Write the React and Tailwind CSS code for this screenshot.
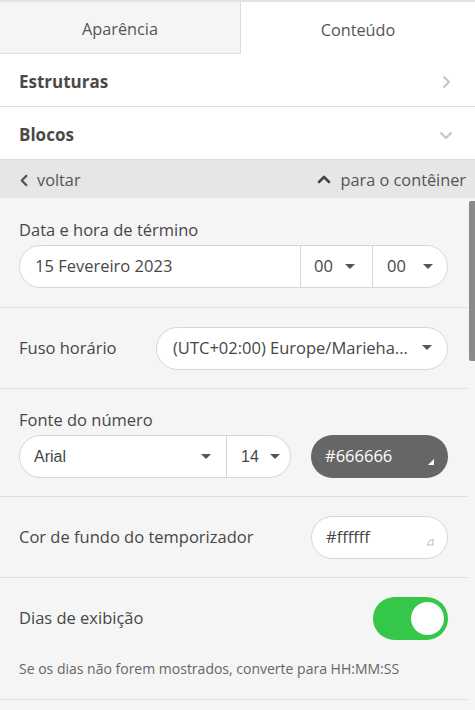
import React from 'react';

const Caret = ({ className = '' }) => (
  <svg width="10" height="6" viewBox="0 0 10 6" className={className}>
    <path d="M0 0 L10 0 L5 5 Z" fill="#555" />
  </svg>
);

const Chevron = ({ dir = 'right', color = '#c4c4c4', size = 14, stroke = 2 }) => {
  const d = {
    right: 'M5 2 L10 7 L5 12',
    down: 'M2 5 L7 10 L12 5',
    left: 'M9 2 L4 7 L9 12',
    up: 'M2 9 L7 4 L12 9',
  }[dir];
  return (
    <svg width={size} height={size} viewBox="0 0 14 14">
      <path d={d} fill="none" stroke={color} strokeWidth={stroke} strokeLinecap="round" strokeLinejoin="round" />
    </svg>
  );
};

const Corner = ({ light }) => (
  <svg width="8" height="8" viewBox="0 0 8 8" className="absolute right-[13px] bottom-[12px]">
    {light ? (
      <path d="M7 1 L7 7 L1 7 Q2 3 7 1 Z" fill="none" stroke="#bbb" strokeWidth="1" />
    ) : (
      <path d="M7 1 L7 7 L1 7 Z" fill="#fff" />
    )}
  </svg>
);

export default function App() {
  return (
    <div className="w-[475px] h-[710px] overflow-hidden bg-white text-[#474747] relative" style={{ fontFamily: '"Open Sans", "Noto Sans", sans-serif' }}>
      {/* tabs */}
      <div className="flex h-[54px] border-t-2 border-[#e3e3e3]">
        <div className="w-[241px] flex items-center justify-center pt-[4px] bg-[#f5f5f5] border-r border-b border-[#dcdcdc] text-[16.3px] text-[#555]">Aparência</div>
        <div className="flex-1 flex items-center justify-center pt-[4px] text-[16.3px] text-[#555]">Conteúdo</div>
      </div>

      <div className="h-[53px] flex items-center justify-between pt-[3px] pl-[19px] pr-[22px] border-b border-[#dcdcdc]">
        <span className="text-[17px] font-bold text-[#4a4a4a]">Estruturas</span>
        <Chevron dir="right" />
      </div>
      <div className="h-[53px] flex items-center justify-between pt-[3px] pl-[19px] pr-[22px] border-b border-[#dcdcdc]">
        <span className="text-[17px] font-bold text-[#4a4a4a]">Blocos</span>
        <Chevron dir="down" />
      </div>

      <div className="h-[38px] bg-[#e6e6e6] flex items-center justify-between pt-[2px] pl-[18px] pr-[9px] text-[16.3px] text-[#555]">
        <div className="flex items-center gap-[6px]">
          <Chevron dir="left" color="#555" size={13} stroke={2.4} />
          <span>voltar</span>
        </div>
        <div className="flex items-center gap-[10px]">
          <Chevron dir="up" color="#444" size={14} stroke={2.6} />
          <span>para o contêiner</span>
        </div>
      </div>

      <div className="bg-[#f5f5f5] flex">
        <div className="w-[467px]">
          {/* date */}
          <div className="pl-[19px] pr-[19px] pt-[21px] pb-[19px] border-b border-[#dcdcdc]">
            <div className="text-[16.5px] leading-[22px] mb-[4px]">Data e hora de término</div>
            <div className="h-[43px] flex bg-white border border-[#d6d6d6] rounded-full text-[16.5px]">
              <div className="w-[281px] flex items-center pl-[15px] border-r border-[#d6d6d6]">15 Fevereiro 2023</div>
              <div className="w-[72px] flex items-center justify-between pl-[13px] pr-[17px] border-r border-[#d6d6d6]">
                <span>00</span>
                <Caret />
              </div>
              <div className="flex-1 flex items-center justify-between pl-[14px] pr-[14px]">
                <span>00</span>
                <Caret />
              </div>
            </div>
          </div>

          {/* timezone */}
          <div className="h-[81px] flex items-center justify-between pl-[19px] pr-[19px] border-b border-[#dcdcdc]">
            <span className="text-[16.5px]">Fuso horário</span>
            <div className="w-[292px] h-[43px] bg-white border border-[#d6d6d6] rounded-full flex items-center justify-between pl-[16px] pr-[15px] text-[16.5px]">
              <span className="whitespace-nowrap">(UTC+02:00) Europe/Marieha...</span>
              <Caret />
            </div>
          </div>

          {/* font */}
          <div className="pl-[19px] pr-[19px] pt-[20px] pb-[18px] border-b border-[#dcdcdc]">
            <div className="text-[16.5px] leading-[22px] mb-[4px]">Fonte do número</div>
            <div className="flex items-center justify-between">
              <div className="w-[272px] h-[43px] flex bg-white border border-[#d6d6d6] rounded-full">
                <div className="w-[207px] flex items-center justify-between pl-[14px] pr-[15px] border-r border-[#d6d6d6]" style={{ fontFamily: '"Liberation Sans", Arial, sans-serif' }}>
                  <span className="text-[16px]">Arial</span>
                  <Caret />
                </div>
                <div className="flex-1 flex items-center justify-between pl-[14px] pr-[10px]">
                  <span className="text-[16px]" style={{ fontFamily: '"Liberation Sans", Arial, sans-serif' }}>14</span>
                  <Caret />
                </div>
              </div>
              <div className="relative w-[137px] h-[43px] rounded-full bg-[#666666] flex items-center pl-[14px] text-[16.5px] text-white">
                #666666
                <Corner />
              </div>
            </div>
          </div>

          {/* bg color */}
          <div className="h-[81px] flex items-center justify-between pl-[19px] pr-[19px] border-b border-[#dcdcdc]">
            <span className="text-[16.5px]">Cor de fundo do temporizador</span>
            <div className="relative w-[137px] h-[43px] rounded-full bg-white border border-[#d6d6d6] flex items-center pl-[14px] text-[16.5px]">
              #ffffff
              <Corner light />
            </div>
          </div>

          {/* days */}
          <div className="pl-[19px] pr-[19px] pt-[19px] pb-[20px] border-b border-[#dcdcdc]">
            <div className="flex items-center justify-between">
              <span className="text-[16.5px]">Dias de exibição</span>
              <div className="w-[75px] h-[43px] rounded-full bg-[#34c74a] flex items-center justify-end pr-[4px]">
                <div className="w-[33px] h-[33px] rounded-full bg-white" />
              </div>
            </div>
            <div className="mt-[19px] text-[14px] leading-[20px] text-[#666]">Se os dias não forem mostrados, converte para HH:MM:SS</div>
          </div>
          <div className="h-[40px]" />
        </div>
        <div className="flex-1 relative">
          <div className="absolute left-[2px] right-0 top-[3px] h-[160px] bg-[#8a8a8a] rounded-l-[2px]" />
        </div>
      </div>
    </div>
  );
}
